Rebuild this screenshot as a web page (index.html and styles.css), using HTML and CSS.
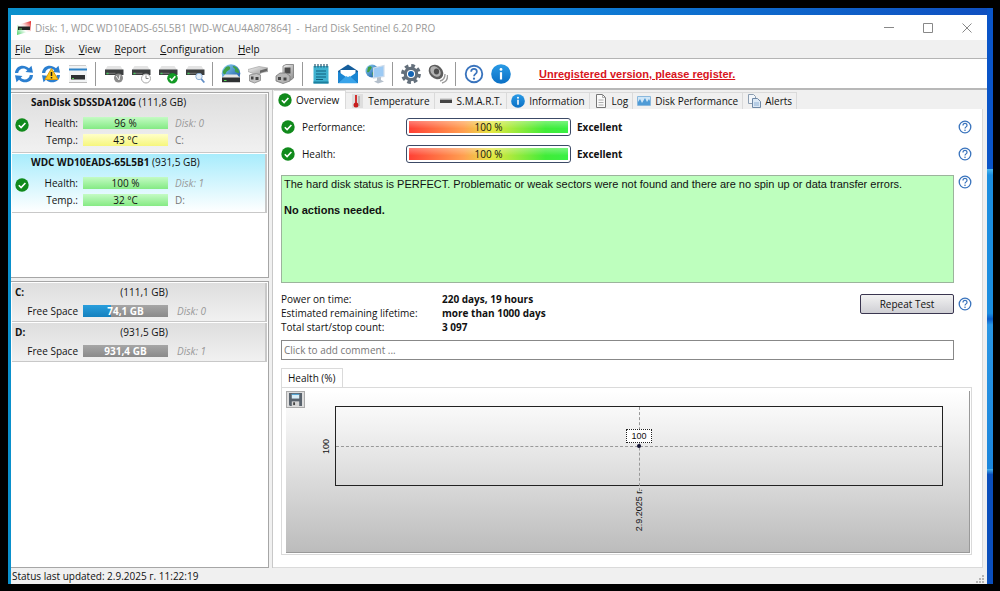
FILE: index.html
```html
<!DOCTYPE html>
<html lang="en">
	<head>
		<meta charset="UTF-8">
		<title>Hard Disk Sentinel</title>
		<link rel="stylesheet" href="styles.css">
	</head>
	<body>
		<svg class="defs" width="0" height="0" aria-hidden="true">
			<defs>
				<linearGradient id="gBlue" x1="0" y1="0" x2="0" y2="1"><stop offset="0" stop-color="#2a9be6"/><stop offset="1" stop-color="#0a6fc4"/></linearGradient>
				<linearGradient id="gGray" x1="0" y1="0" x2="1" y2="1"><stop offset="0" stop-color="#f4f4f4"/><stop offset="1" stop-color="#8c8c8c"/></linearGradient>
				<linearGradient id="gGlobe" x1="0" y1="0" x2="1" y2="1"><stop offset="0" stop-color="#8fd6f5"/><stop offset="1" stop-color="#0b4a9c"/></linearGradient>
				<linearGradient id="gLogo" x1="0" y1="1" x2="1" y2="0"><stop offset="0" stop-color="#4ed16a"/><stop offset=".45" stop-color="#fff"/><stop offset=".6" stop-color="#fbe0e0"/><stop offset="1" stop-color="#e01c1c"/></linearGradient>
			</defs>
			<symbol id="ok" viewBox="0 0 14 14">
				<circle cx="7" cy="7" r="6.7" fill="#118a1c"/>
				<path d="M3.8 7.2l2.3 2.3 4.3-4.5" fill="none" stroke="#fff" stroke-width="1.6"/>
			</symbol>
			<symbol id="help" viewBox="0 0 14 14">
				<circle cx="7" cy="7" r="5.8" fill="#fff" stroke="#3a74bd" stroke-width="1.3"/>
				<path d="M5 5.4c0-2.6 4-2.6 4 0 0 1.5-2 1.5-2 3.2" fill="none" stroke="#3a74bd" stroke-width="1.2"/>
				<circle cx="7" cy="10.3" r=".8" fill="#3a74bd"/>
			</symbol>
			<symbol id="info" viewBox="0 0 20 20">
				<circle cx="10" cy="10" r="9.8" fill="url(#gBlue)"/>
				<circle cx="10" cy="5.4" r="1.4" fill="#fff"/>
				<path d="M10 8.2v7.3" stroke="#fff" stroke-width="2.2"/>
			</symbol>
			<symbol id="refresh" viewBox="0 0 20 20">
				<path d="M1 9C1.500 1.500 10-.5 15 4.300L17.500 1.800 19 8.800 11.500 8 13.300 6.200C10 3 4.800 4.500 4.200 9z" fill="#2b7fd0"/>
				<path d="M19 11C18.500 18.500 10 20.500 5 15.700L2.500 18.200 1 11.200 8.500 12 6.700 13.800C10 17 15.200 15.500 15.800 11z" fill="#2b7fd0"/>
			</symbol>
			<symbol id="drive" viewBox="0 0 20 20">
				<path d="M3.500 2h13L19 6H1z" fill="#e4e4e4"/>
				<path d="M1 5.500h18.500v5.500H1z" fill="#3b3d3e"/>
				<path d="M2.500 9.300h9" stroke="#777"/>
				<path d="M2.500 9.500h2" stroke="#48d060" stroke-width="1.4"/>
			</symbol>
		</svg>
		<div class="desktop">
			<div class="window">
				<header class="titlebar">
					<svg class="logo" viewBox="0 0 14 14"><path d="M0 4L14 0v10L0 14z" fill="url(#gLogo)"/><path d="M1 5.500h12v3.500H1z" fill="#222"/><path d="M2 8h3" stroke="#6c6"/></svg>
					<h1>Disk: 1, WDC WD10EADS-65L5B1 [WD-WCAU4A807864] &nbsp;- &nbsp;Hard Disk Sentinel 6.20 PRO</h1>
					<div class="winbtns">
						<button type="button" aria-label="Minimize"><svg viewBox="0 0 10 10"><path d="M0 4.500h10"/></svg></button>
						<button type="button" aria-label="Maximize"><svg viewBox="0 0 10 10"><path d="M.5 .5h9v9h-9z"/></svg></button>
						<button type="button" aria-label="Close"><svg viewBox="0 0 10 10"><path d="M.5 .5l9 9M9.500 .5l-9 9"/></svg></button>
					</div>
				</header>
				<nav class="menubar">
					<button type="button"><u>F</u>ile</button>
					<button type="button"><u>D</u>isk</button>
					<button type="button"><u>V</u>iew</button>
					<button type="button"><u>R</u>eport</button>
					<button type="button"><u>C</u>onfiguration</button>
					<button type="button"><u>H</u>elp</button>
				</nav>
				<div class="toolbar">
					<button type="button" aria-label="Refresh"><svg viewBox="0 0 20 20"><use href="#refresh"/></svg></button>
					<button type="button" aria-label="Refresh now"><svg viewBox="0 0 20 20"><use href="#refresh"/><path d="M10.500 4.500L17 15.500H4z" fill="#fdc81e" stroke="#d99a0c"/><path d="M10.500 8v4M10.500 13v1.400" stroke="#222" stroke-width="1.500"/></svg></button>
					<button type="button" aria-label="Compact view"><svg viewBox="0 0 20 20"><path d="M1 2h18v16.500H1z" fill="#f1f3f4"/><path d="M1 1.500h17" stroke="#ccc"/><path d="M1 5.500h18" stroke="#2f83c6" stroke-width="2"/><path d="M3 11h14v4.500H3z" fill="#2e3032"/><path d="M4 14.500h2" stroke="#5c5"/><path d="M1 18.500h18" stroke="#bbb"/></svg></button>
					<span class="sep"></span>
					<button type="button" aria-label="Short test"><svg viewBox="0 0 20 20"><use href="#drive"/><circle cx="14.500" cy="14" r="4.500" fill="#8b8b8b"/><path d="M12 12l3 4 1-5" stroke="#eee" fill="none"/></svg></button>
					<button type="button" aria-label="Extended test"><svg viewBox="0 0 20 20"><use href="#drive"/><circle cx="15" cy="14.500" r="4.500" fill="#fff" stroke="#aaa"/><path d="M15 11.500v3h2.500" stroke="#888" fill="none"/></svg></button>
					<button type="button" aria-label="Surface test"><svg viewBox="0 0 20 20"><use href="#drive"/><circle cx="14.500" cy="14.200" r="5.300" fill="#129a24"/><path d="M11.800 14.300l2 2 3.500-4" stroke="#fff" stroke-width="1.600" fill="none"/></svg></button>
					<button type="button" aria-label="Find disk"><svg viewBox="0 0 20 20"><use href="#drive"/><circle cx="14" cy="12.500" r="3.200" fill="#e6f0fa" stroke="#8fb2da"/><path d="M16.300 15l3 3.500" stroke="#5f8cc4" stroke-width="1.800"/></svg></button>
					<span class="sep"></span>
					<button type="button" aria-label="Network disk"><svg viewBox="0 0 20 20"><circle cx="10" cy="9.500" r="9.300" fill="url(#gGlobe)"/><path d="M5 3c3-2 5 0 4 2s-3 1-4 4-4 0-3-2zM12 2c4 0 6 4 6 7-2 0-5-1-4-3s-3-2-2-4z" fill="#3fa046"/><path d="M4 10.500h12L19 14H1z" fill="#e6e6e6"/><path d="M1 13.500h18V18H1z" fill="#2f3133"/><path d="M1 18.500h18" stroke="#ccc"/><path d="M3 16.500h2.500" stroke="#5d5"/></svg></button>
					<button type="button" aria-label="Connect"><svg viewBox="0 0 20 20"><path d="M0 5.500l11-3 9 1.500v3.500l-6 1-4 3-10-4z" fill="url(#gGray)" stroke="#999" stroke-width=".6"/><path d="M1.500 11l7-1.500 4 1.500v5.500l-6 2.500-5-2z" fill="#c4c4c4" stroke="#888" stroke-width=".8"/><path d="M3 12.500h2.500v3H3zM7.500 13h3v3h-3z" fill="#444"/><path d="M12 6.500l7-2v2.500l-7 2z" fill="#666"/></svg></button>
					<button type="button" aria-label="Eject"><svg viewBox="0 0 20 20"><path d="M8 2l3-1.500h7.500V14L16 16H8z" fill="url(#gGray)" stroke="#777" stroke-width=".8"/><path d="M9.500 3.500h6v6h-6z" fill="#4a4a4a"/><path d="M1 12l4-3h6l4 3v5l-7 2.500L1 17z" fill="#b5b5b5" stroke="#777" stroke-width=".8"/><path d="M3 13h3v3H3zM8.500 13.500h3v3h-3z" fill="#444"/></svg></button>
					<span class="sep"></span>
					<button type="button" aria-label="Report"><svg viewBox="0 0 20 20"><path d="M2.500 2h15v17.500h-15z" fill="#3fb2d0"/><path d="M2.500 17.500h15v2h-15z" fill="#1c7f9e"/><path d="M4 0v3.500M7 0v3.500M10 0v3.500M13 0v3.500M16 0v3.500" stroke="#27566e" stroke-width="1.200"/><path d="M5 7h10M5 10h10M5 13h10M5 15.500h7" stroke="#115f7c" stroke-width="1.100"/></svg></button>
					<button type="button" aria-label="Send report"><svg viewBox="0 0 20 20"><path d="M0 7l10-6.500L20 7v12H0z" fill="#155e9c"/><path d="M2.500 6h15v7h-15z" fill="#fff"/><path d="M0 7.500l7.500 5L0 19z" fill="#1a86d3"/><path d="M20 7.500l-7.500 5L20 19z" fill="#1a86d3"/><path d="M0 19.200l8-7.200 2 1 2-1 8 7.200z" fill="#39a4ea"/></svg></button>
					<button type="button" aria-label="Publish report"><svg viewBox="0 0 20 20"><circle cx="7" cy="7" r="6.500" fill="url(#gGlobe)"/><path d="M3 3c3-2 5 0 3 2s-1 4-4 3zM7 9l3-3v5l-2 2z" fill="#3f9d42"/><path d="M8.500 4L19 1.500v11L8.500 14z" fill="#9ccaf4" stroke="#d0dcea" stroke-width="1.200"/><path d="M12 13.500l4-.5v3l3 1.500-6 2-4-2 3-1z" fill="#b4bfcb"/></svg></button>
					<span class="sep"></span>
					<button type="button" aria-label="Settings"><svg viewBox="0 0 20 20"><circle cx="10" cy="10" r="8.200" fill="none" stroke="#636f7b" stroke-width="3.400" stroke-dasharray="3.600 2.840"/><circle cx="10" cy="10" r="5.700" fill="#fff" stroke="#636f7b" stroke-width="3.200"/><circle cx="10" cy="10" r="3" fill="#1464b4"/></svg></button>
					<button type="button" aria-label="Sounds"><svg viewBox="0 0 20 20"><ellipse cx="8" cy="8" rx="8" ry="6.500" transform="rotate(45 8 8)" fill="#5e5e5e"/><ellipse cx="7.500" cy="7.500" rx="6" ry="4.300" transform="rotate(45 7.500 7.500)" fill="#b2b2b2"/><ellipse cx="8.500" cy="7.500" rx="2.600" ry="3" fill="#4e4e4e"/><path d="M12 17q5-1 5-7M14 19q6-1.500 5.500-8" fill="none" stroke="#9c9c9c" stroke-width="1.400"/></svg></button>
					<span class="sep"></span>
					<button type="button" aria-label="Help"><svg viewBox="0 0 14 14"><use href="#help"/></svg></button>
					<button type="button" aria-label="About"><svg viewBox="0 0 20 20"><use href="#info"/></svg></button>
					<a class="register" href="#">Unregistered version, please register.</a>
				</div>

				<div class="content">
					<aside class="side">
						<ul class="disks">
							<li class="disk">
								<p class="name"><b>SanDisk SDSSDA120G</b> (111,8 GB)</p>
								<svg class="state" viewBox="0 0 14 14"><use href="#ok"/></svg>
								<div class="row"><span class="label">Health:</span><span class="bar green">96 %</span><i>Disk: 0</i></div>
								<div class="row"><span class="label">Temp.:</span><span class="bar yellow">43 °C</span><span class="letter">C:</span></div>
							</li>
							<li class="disk selected">
								<p class="name"><b>WDC WD10EADS-65L5B1</b> (931,5 GB)</p>
								<svg class="state" viewBox="0 0 14 14"><use href="#ok"/></svg>
								<div class="row"><span class="label">Health:</span><span class="bar green">100 %</span><i>Disk: 1</i></div>
								<div class="row"><span class="label">Temp.:</span><span class="bar green">32 °C</span><span class="letter">D:</span></div>
							</li>
						</ul>
						<ul class="volumes">
							<li class="volume">
								<div class="head"><b>C:</b><span>(111,1 GB)</span></div>
								<div class="row"><span class="label">Free Space</span><span class="bar space"><span class="used" style="width:33%"></span><b>74,1 GB</b></span><i>Disk: 0</i></div>
							</li>
							<li class="volume">
								<div class="head"><b>D:</b><span>(931,5 GB)</span></div>
								<div class="row"><span class="label">Free Space</span><span class="bar space"><span class="used" style="width:0%"></span><b>931,4 GB</b></span><i>Disk: 1</i></div>
							</li>
						</ul>
					</aside>

					<main class="main">
						<div class="tabs" role="tablist">
							<button type="button" role="tab" class="active" aria-selected="true"><svg viewBox="0 0 14 14"><use href="#ok"/></svg>Overview</button>
							<button type="button" role="tab"><svg viewBox="0 0 14 14"><path d="M2 0h11v14H2z" fill="#dedede"/><path d="M6 1v9" stroke="#d23030" stroke-width="2"/><circle cx="6" cy="11" r="2.500" fill="#c61f1f"/><path d="M9 2v10" stroke="#999"/></svg>Temperature</button>
							<button type="button" role="tab"><svg viewBox="0 0 14 14"><path d="M1 5.500h12v3.500H1z" fill="#444"/><path d="M1 5h12" stroke="#bbb"/></svg>S.M.A.R.T.</button>
							<button type="button" role="tab"><svg viewBox="0 0 20 20"><use href="#info"/></svg>Information</button>
							<button type="button" role="tab"><svg viewBox="0 0 14 14"><path d="M2.500 .5h6l3 3v10h-9z" fill="#fafafa" stroke="#777"/><path d="M8.500 .5v3h3M4.500 6h5M4.500 8.500h5M4.500 11h5" fill="none" stroke="#999" stroke-width=".8"/></svg>Log</button>
							<button type="button" role="tab"><svg viewBox="0 0 14 14"><path d="M.5 2.500h13v9H.5z" fill="#cfe6f7" stroke="#8ab8dd"/><path d="M1 11V8l2-3 2 4 3-5 2 4 2-3 1 2v4z" fill="#4f9bd6"/></svg>Disk Performance</button>
							<button type="button" role="tab"><svg viewBox="0 0 14 14"><path d="M1.500 .5h5l2 2v7h-7z" fill="#f2f6fa" stroke="#8a9cb0"/><path d="M5.500 4.500h5l3 3v6h-8z" fill="#dbe8f5" stroke="#6f88a5"/><path d="M7 9h5M7 11h5" stroke="#7fa3cc" stroke-width=".8"/></svg>Alerts</button>
						</div>

						<section class="page">
							<div class="line">
								<div class="gauge"><svg class="state" viewBox="0 0 14 14"><use href="#ok"/></svg><span class="what">Performance:</span><span class="meter">100 %</span><b>Excellent</b></div>
								<button type="button" class="help" aria-label="About performance"><svg viewBox="0 0 14 14"><use href="#help"/></svg></button>
							</div>
							<div class="line">
								<div class="gauge"><svg class="state" viewBox="0 0 14 14"><use href="#ok"/></svg><span class="what">Health:</span><span class="meter">100 %</span><b>Excellent</b></div>
								<button type="button" class="help" aria-label="About health"><svg viewBox="0 0 14 14"><use href="#help"/></svg></button>
							</div>
							<div class="line report">
								<div class="status">
									<p>The hard disk status is PERFECT. Problematic or weak sectors were not found and there are no spin up or data transfer errors.</p>
									<p><b>No actions needed.</b></p>
								</div>
								<button type="button" class="help" aria-label="About status"><svg viewBox="0 0 14 14"><use href="#help"/></svg></button>
							</div>
							<div class="line summary">
								<dl>
									<dt>Power on time:</dt><dd>220 days, 19 hours</dd>
									<dt>Estimated remaining lifetime:</dt><dd>more than 1000 days</dd>
									<dt>Total start/stop count:</dt><dd>3 097</dd>
								</dl>
								<button type="button" class="repeat">Repeat Test</button>
								<button type="button" class="help" aria-label="About the test"><svg viewBox="0 0 14 14"><use href="#help"/></svg></button>
							</div>
							<input class="comment" type="text" placeholder="Click to add comment ..." aria-label="Comment">

							<button type="button" class="charttab">Health (%)</button>
							<div class="chartbox">
								<div class="chart">
									<button type="button" class="save" aria-label="Save chart"><svg viewBox="0 0 14 14"><path d="M0 0h14v14H1l-1-1z" fill="#59636d"/><path d="M3 1h8v5H3z" fill="#d8eef8"/><path d="M3 1.500h8" stroke="#3d9bd0"/><path d="M3 9h8v5H3z" fill="#d5d5d5"/><path d="M4.500 10h2v3h-2z" fill="#444"/></svg></button>
									<div class="plot">
										<span class="ylabel">100</span>
										<span class="hline"></span>
										<span class="vline"></span>
										<span class="point"></span>
										<span class="value">100</span>
										<span class="xlabel">2.9.2025 г.</span>
									</div>
								</div>
							</div>
						</section>
					</main>
				</div>

				<footer class="statusbar">
					<span>Status last updated: 2.9.2025 г. 11:22:19</span>
					<svg class="grip" viewBox="0 0 9 9"><path d="M6 0h2v2H6zM3 3h2v2H3zM6 3h2v2H6zM0 6h2v2H0zM3 6h2v2H3zM6 6h2v2H6z" fill="#b5b5b5"/></svg>
				</footer>
			</div>
		</div>
	</body>
</html>
```

FILE: styles.css
```css
*{
	padding: 0;
	margin: 0;
	box-sizing: border-box;
	list-style: none;
}
body{
	min-height: 100vh;
	display: flex;
	padding: 8px 7px 7px 8px;
	background: #000;
	color: #111;
	font: 10px/14px "Open Sans","Noto Sans",sans-serif;
}
button,input{
	font: inherit;
	color: inherit;
	background: none;
	border: 0;
}
svg{
	display: block;
	flex: none;
}
.defs{
	position: absolute;
}
.desktop{
	flex: 1;
	display: flex;
	padding: 7px 6px 0 3px;
	background:
		linear-gradient(#0a55c8 28%,#4ab8f0 28%,#1c8ee0 29%,#1c8ee0 53%,#0a5cc8 54%,#2a96e4 55%,#1c86dc 80%,#4ab8f0 80%,#0b4fbc 81%) right/6px 100% no-repeat,
		linear-gradient(90deg,#0a90cc,#0d84d8 50%,#0f4fc0);
}
.window{
	flex: 1;
	min-width: 0;
	display: flex;
	flex-direction: column;
	background: #f0f0f0;
}

/* title bar and menu */
.titlebar{
	height: 25px;
	display: flex;
	align-items: center;
	padding-left: 6px;
	background: #fff;
	color: #999;
}
.logo{
	width: 14px;
	height: 14px;
	margin-right: 4px;
}
.titlebar h1{
	flex: 1;
	font-size: 10px;
	font-weight: normal;
}
.winbtns{
	display: flex;
	padding-right: 1px;
}
.winbtns button{
	width: 39px;
	height: 25px;
	display: flex;
	align-items: center;
	justify-content: center;
}
.winbtns svg{
	width: 10px;
	height: 10px;
	fill: none;
	stroke: #888;
}
.menubar{
	height: 19px;
	display: flex;
	gap: 14px;
	padding-left: 4px;
	border-bottom: 1px solid #b4b4b4;
}

/* toolbar */
.toolbar{
	height: 31px;
	display: flex;
	align-items: center;
	gap: 2px;
	background: #fff;
	border-bottom: 2px solid #b8b8b8;
}
.toolbar button{
	width: 25px;
	height: 24px;
	display: flex;
	align-items: center;
	justify-content: center;
}
.toolbar svg{
	width: 20px;
	height: 20px;
}
.sep{
	width: 7px;
	height: 24px;
	background: linear-gradient(#999,#999) center/1px 100% no-repeat;
}
.register{
	margin-left: 24px;
	font: bold 11px/14px "Liberation Sans",Arial,sans-serif;
	color: #d8141c;
}

/* disks and volumes */
.content{
	flex: 1;
	display: flex;
	gap: 3px;
}
.side{
	width: 258px;
	flex: none;
	display: flex;
	flex-direction: column;
	gap: 3px;
	padding-top: 2px;
}
.disks,.volumes{
	padding: 1px;
	background: #fff;
	border: 1px solid #a6a6a6;
	border-left: 0;
}
.disks{
	height: 186px;
}
.volumes{
	flex: 1;
}
.disk,.volume{
	background: linear-gradient(#dedede,#f1f1f1);
	border-right: 2px solid #c8c8c8;
	border-bottom: 1px solid #c8c8c8;
	margin-bottom: 1px;
}
.disk{
	position: relative;
	height: 59px;
	padding: 1px 2px 2px 19px;
}
.disk .name{
	margin-bottom: 5px;
}
.selected{
	background: linear-gradient(#a8ecfc,#fff);
}
.state{
	width: 14px;
	height: 14px;
}
.disk .state{
	position: absolute;
	left: 3px;
	top: 24px;
}
.row{
	display: grid;
	grid-template-columns: 47px 85px 1fr;
	gap: 5px;
	align-items: center;
	height: 17px;
}
.label{
	text-align: right;
	white-space: nowrap;
}
.row i{
	padding-left: 2px;
	color: #999;
}
.letter{
	padding-left: 2px;
	color: #777;
}
.bar{
	height: 12px;
	line-height: 12px;
	text-align: center;
}
.green{
	background: linear-gradient(#c4fbc4,#84ea84);
}
.yellow{
	background: linear-gradient(#ffffc8,#f6f67c);
}
.volume{
	height: 39px;
	padding: 2px 2px 2px 3px;
}
.volume .head{
	display: flex;
	justify-content: space-between;
	width: 153px;
	height: 17px;
}
.volume .row{
	grid-template-columns: 63px 85px 1fr;
}
.volume .row i{
	padding-left: 4px;
}
.space{
	display: block;
	position: relative;
	color: #fff;
	background: linear-gradient(#a6a6a6,#8a8a8a);
}
.space .used{
	position: absolute;
	left: 0;
	top: 0;
	height: 100%;
	background: linear-gradient(#2a9edc,#1480be);
}
.space b{
	position: relative;
}

/* tab strip */
.main{
	flex: 1;
	min-width: 0;
	display: flex;
	flex-direction: column;
	padding-right: 4px;
	border-left: 1px solid #c8c8c8;
}
.tabs{
	height: 19px;
	display: flex;
	align-items: flex-end;
	padding-left: 1px;
}
.tabs button{
	height: 17px;
	display: flex;
	align-items: center;
	gap: 4px;
	padding: 0 4px;
	border: 1px solid #dadada;
	border-width: 1px 1px 0 0;
}
.tabs .active{
	height: 19px;
	padding-right: 6px;
	background: #fff;
}
.tabs svg{
	width: 14px;
	height: 14px;
}
.page{
	flex: 1;
	display: flex;
	flex-direction: column;
	padding: 8px 10px 12px 8px;
	background: #fff;
	border: 1px solid #dadada;
	border-width: 0 1px 1px 0;
}

/* overview page */
.line{
	display: grid;
	grid-template-columns: 1fr 14px;
	gap: 4px;
	margin-bottom: 7px;
}
.gauge{
	display: grid;
	grid-template-columns: 14px 99px 165px 1fr;
	align-items: center;
	gap: 6px;
	height: 20px;
}
.what{
	padding-left: 1px;
}
.meter{
	height: 18px;
	line-height: 12px;
	padding: 2px;
	border: 1px solid #3c4a66;
	border-radius: 3px;
	text-align: center;
	background: linear-gradient(rgba(255,255,255,0.4),rgba(255,255,255,0) 60%),linear-gradient(90deg,#ff3c34,#ffa050 35%,#e4e840 52%,#40ec38 85%,#38f044);
	background-clip: content-box;
}
.help{
	width: 14px;
	height: 14px;
	align-self: start;
}
.gauge + .help{
	align-self: center;
}
.help svg{
	width: 14px;
	height: 14px;
}
.report{
	margin-top: 4px;
}
.status{
	height: 108px;
	padding: 2px;
	background: #beffbe;
	border: 1px solid #9cb49c;
	font: 11px/13px "Liberation Sans",Arial,sans-serif;
}
.status p{
	margin-bottom: 13px;
}
.line.summary{
	grid-template-columns: 1fr 94px 14px;
	margin: 2px 0 6px;
}
.summary dl{
	display: grid;
	grid-template-columns: 161px 1fr;
}
.summary dd{
	font-weight: bold;
}
.repeat{
	height: 20px;
	margin-top: 2px;
	border: 1px solid #3a3650;
	border-radius: 2px;
	background: linear-gradient(#f2f2f2,#cfcfd4);
}
.summary .help{
	margin-top: 5px;
}
.comment{
	height: 20px;
	margin: 0 18px 8px 0;
	padding: 0 2px;
	border: 1px solid #888;
}
.comment::placeholder{
	color: #777;
}

/* chart */
.charttab{
	align-self: flex-start;
	height: 19px;
	padding: 0 6px;
	border: 1px solid #dadada;
	border-bottom: 0;
}
.chartbox{
	flex: 1;
	display: flex;
	padding: 3px 1px 1px 4px;
	border: 1px solid #dadada;
}
.chart{
	flex: 1;
	display: flex;
	align-items: flex-start;
	padding: 0 26px 0 0;
	background: linear-gradient(#fff,#f0f0f0 25%,#bcbcbc);
	border-right: 1px solid #999;
	border-bottom: 1px solid #999;
}
.save{
	width: 19px;
	height: 17px;
	display: flex;
	align-items: center;
	justify-content: center;
	background: #ddd;
	border: 1px solid #aaa;
}
.save svg{
	width: 13px;
	height: 13px;
}
.plot{
	flex: 1;
	position: relative;
	height: 80px;
	margin: 15px 0 0 30px;
	border: 1px solid #222;
	font: 9px/12px "Liberation Sans",Arial,sans-serif;
}
.plot span{
	position: absolute;
}
.hline{
	left: 0;
	right: 0;
	top: 50%;
	border-top: 1px dashed #999;
}
.vline{
	left: 50%;
	top: 0;
	height: 84px;
	border-left: 1px dashed #999;
}
.point{
	left: 50%;
	top: 50%;
	width: 4px;
	height: 4px;
	margin: -2px;
	border-radius: 50%;
	background: #113;
}
.value{
	left: 50%;
	top: 22px;
	width: 26px;
	height: 14px;
	margin-left: -13px;
	border: 1px dotted #222;
	background: #fff;
	text-align: center;
}
.ylabel,.xlabel{
	writing-mode: vertical-rl;
	transform: rotate(180deg);
	white-space: nowrap;
}
.ylabel{
	left: -16px;
	top: 0;
	height: 100%;
	text-align: center;
}
.xlabel{
	left: 50%;
	top: 82px;
	margin-left: -6px;
}

.statusbar{
	height: 16px;
	display: flex;
	align-items: center;
	justify-content: space-between;
	padding: 0 2px 0 1px;
}
.grip{
	width: 9px;
	height: 9px;
	align-self: flex-end;
}
```
